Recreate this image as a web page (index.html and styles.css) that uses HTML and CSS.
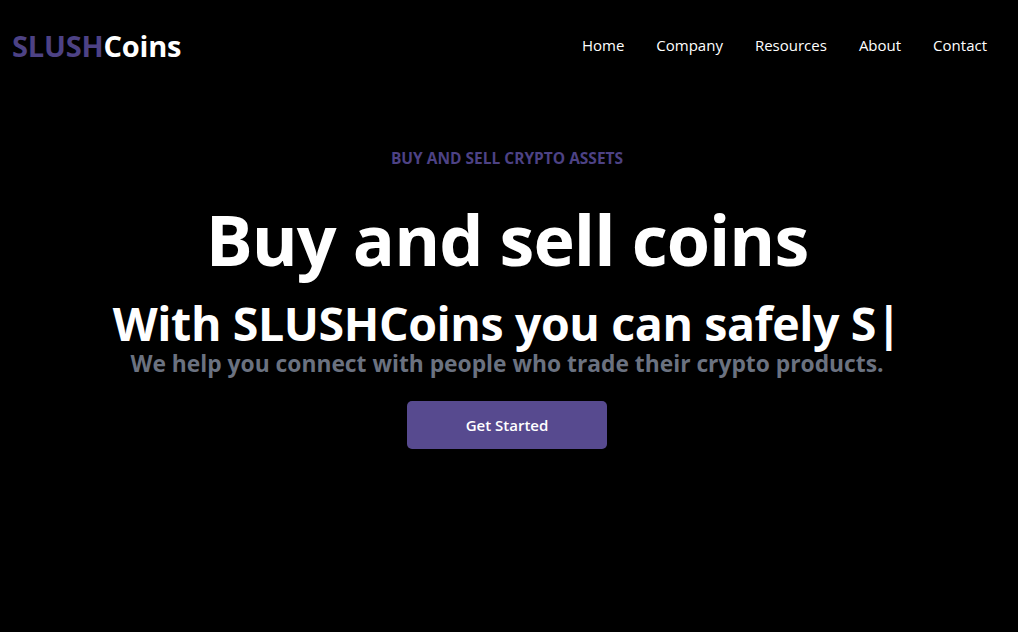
FILE: index.html
```html
<!DOCTYPE html>
<html lang="en">
<head>
<meta charset="utf-8">
<title>SLUSHCoins</title>
<link rel="stylesheet" href="styles.css">
</head>
<body>
<header class="navbar">
  <a class="logo" href="#"><span class="logo-accent">SLUSH</span>Coins</a>
  <nav class="nav">
    <a href="#">Home</a>
    <a href="#">Company</a>
    <a href="#">Resources</a>
    <a href="#">About</a>
    <a href="#">Contact</a>
  </nav>
</header>
<main class="hero">
  <p class="eyebrow">BUY AND SELL CRYPTO ASSETS</p>
  <h1 class="title">Buy and sell coins</h1>
  <h2 class="typed">With SLUSHCoins you can safely S|</h2>
  <p class="lead">We help you connect with people who trade their crypto products.</p>
  <button class="cta">Get Started</button>
</main>
</body>
</html>
```
FILE: styles.css
```css
* { box-sizing: border-box; }
html, body {
  margin: 0;
  padding: 0;
  background: #000;
  color: #fff;
  font-family: "Open Sans", "Noto Sans", sans-serif;
}
a { color: inherit; text-decoration: none; }

.navbar {
  height: 90px;
  display: flex;
  align-items: center;
  justify-content: space-between;
  padding: 0 15px 0 12px;
}
.logo {
  font-size: 29px;
  font-weight: 700;
  color: #fff;
  letter-spacing: -0.2px;
}
.logo-accent { color: #4d4285; }
.nav {
  display: flex;
}
.nav a {
  font-size: 15px;
  padding: 0 16px;
  color: #fff;
}

.hero {
  display: flex;
  flex-direction: column;
  align-items: center;
  text-align: center;
  padding-right: 4px;
}
.eyebrow {
  margin: 57px 0 0;
  font-size: 15.5px;
  font-weight: 700;
  color: #4d4285;
}
.title {
  margin: 28px 0 0;
  font-size: 70px;
  line-height: 1.2;
  font-weight: 700;
  letter-spacing: -1px;
}
.typed {
  margin: 19px 0 0;
  font-size: 46.5px;
  line-height: 1;
  font-weight: 700;
  letter-spacing: -0.4px;
}
.lead {
  margin: 6px 0 0;
  font-size: 22.8px;
  line-height: 1;
  font-weight: 700;
  color: #6b7280;
}
.cta {
  margin-top: 26px;
  width: 200px;
  height: 48px;
  border: none;
  border-radius: 5px;
  background: #574a8f;
  color: #fff;
  font-family: inherit;
  font-size: 15px;
  font-weight: 600;
}
```
